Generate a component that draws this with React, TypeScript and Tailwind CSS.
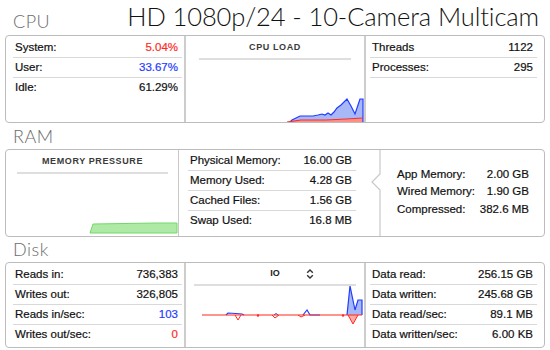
const rowFont = { fontFamily: '"Liberation Sans", Arial, sans-serif' };

type RowProps = {
  label: string;
  value: string;
  color?: string;
  last?: boolean;
};

const Row = ({ label, value, color, last }: RowProps) => (
  <div
    className={
      "flex h-5 items-center justify-between pl-[2px] pr-[4px] text-[11.5px] text-[#111] [-webkit-text-stroke:0.2px_currentColor] " +
      (last ? "" : "border-b border-[#d9d9d9]")
    }
  >
    <span>{label}</span>
    <span className={color}>{value}</span>
  </div>
);

const SectionTitle = ({ children }: { children: string }) => (
  <div
    className="pl-2 text-[18px] font-light leading-none tracking-[0.5px] text-[#6b6b6b]"
    style={{ fontFamily: "Lato, sans-serif" }}
  >
    {children}
  </div>
);

const PanelHeading = ({ children }: { children: React.ReactNode }) => (
  <div className="flex flex-col items-center">
    <div className="flex h-[20px] items-center text-[9px] font-bold tracking-[0.6px] text-[#3a3a3a]">
      {children}
    </div>
    <div className="h-[2px] w-[152px] bg-[#dedede]" />
  </div>
);

const Divider = () => <div className="w-[2px] bg-[#cdcdcd]" />;

const CpuGraph = () => (
  <svg width="178" height="30" viewBox="0 0 178 30" className="block">
    <polygon
      points="101,30 115,28 140,28 160,27 177,26 177,30"
      fill="#ff8f84"
      stroke="none"
    />
    <polygon
      points="104,30 106,28 114,24 127,24 132,23 136,22 139,23 142,21 145,23 148,20 151,16 155,13 161,7 165,14 169,22 172,13 174,7 177,7 177,27 160,27.5 140,28.5 115,28.5"
      fill="#a8b8f6"
    />
    <polyline
      points="104,30 106,28 114,24 127,24 132,23 136,22 139,23 142,21 145,23 148,20 151,16 155,13 161,7 165,14 169,22 172,13 174,7 177,7 177,30"
      fill="none"
      stroke="#1f3dff"
      strokeWidth="1.2"
    />
    <polyline
      points="101,30 115,28 140,28 160,27 177,26"
      fill="none"
      stroke="#ff2a1f"
      strokeWidth="1.2"
    />
  </svg>
);

const IoGraph = () => (
  <svg width="178" height="45" viewBox="0 0 178 45" className="block">
    <polygon
      points="161,29 164,0 169,24 172,14 176,14 176,29"
      fill="#a8b8f6"
    />
    <polyline
      points="161,29 164,0 169,24 172,14 176,14 176,29"
      fill="none"
      stroke="#1f3dff"
      strokeWidth="1.2"
    />
    <polygon points="162,29 167,38 172,29" fill="#ffaaa2" />
    <polyline
      points="162,29 167,38 172,29"
      fill="none"
      stroke="#ff2a1f"
      strokeWidth="1"
    />
    <polyline
      points="40,29 42,27 50,27.5 56,28 58,29"
      fill="none"
      stroke="#1f3dff"
      strokeWidth="1.2"
    />
    <polyline
      points="117,29 121,24 124,29 134,29"
      fill="none"
      stroke="#1f3dff"
      strokeWidth="1.2"
    />
    <polyline
      points="88,29 90,27.5 92,29"
      fill="none"
      stroke="#1f3dff"
      strokeWidth="1"
    />
    <polyline
      points="49,29 52,34 55,29"
      fill="none"
      stroke="#ff2a1f"
      strokeWidth="1"
    />
    <polyline
      points="86,29 89,32 93,29"
      fill="none"
      stroke="#ff2a1f"
      strokeWidth="1"
    />
    <polyline
      points="112,29 115,31 119,29"
      fill="none"
      stroke="#ff2a1f"
      strokeWidth="1"
    />
    <circle cx="72" cy="29.5" r="1.2" fill="#ff2a1f" />
    <circle cx="157" cy="29.5" r="1.2" fill="#ff2a1f" />
    <line x1="16" y1="29" x2="176" y2="29" stroke="#ff2a1f" strokeWidth="1.2" />
  </svg>
);

const UpDown = () => (
  <svg width="8" height="10" viewBox="0 0 8 10" className="block">
    <polyline
      points="1.2,3.8 4,1 6.8,3.8"
      fill="none"
      stroke="#333"
      strokeWidth="1.4"
    />
    <polyline
      points="1.2,6.2 4,9 6.8,6.2"
      fill="none"
      stroke="#333"
      strokeWidth="1.4"
    />
  </svg>
);

export default function App() {
  return (
    <div className="h-[350px] w-[550px] bg-white px-[5px]" style={rowFont}>
      {/* CPU */}
      <div className="flex h-[35px] items-end justify-between pb-[5px]">
        <SectionTitle>CPU</SectionTitle>
        <div
          className="mb-[1px] pr-[6px] text-[25.5px] font-light leading-none tracking-[-0.1px] text-[#111]"
          style={{ fontFamily: "Lato, sans-serif" }}
        >
          HD 1080p/24 - 10-Camera Multicam
        </div>
      </div>
      <div className="flex h-[88px] rounded-[4px] border border-[#bcbcbc]">
        <div className="w-[178px] pl-[7px] pr-[2px] pt-[2px]">
          <Row label="System:" value="5.04%" color="text-[#ff2a1f]" />
          <Row label="User:" value="33.67%" color="text-[#1f3dff]" />
          <Row label="Idle:" value="61.29%" last />
        </div>
        <Divider />
        <div className="flex w-[178px] flex-col justify-between pt-[2px]">
          <PanelHeading>CPU LOAD</PanelHeading>
          <CpuGraph />
        </div>
        <Divider />
        <div className="flex-1 pl-[4px] pr-[7px] pt-[2px]">
          <Row label="Threads" value="1122" />
          <Row label="Processes:" value="295" />
        </div>
      </div>

      {/* RAM */}
      <div className="flex h-[26px] items-end pb-[4px]">
        <SectionTitle>RAM</SectionTitle>
      </div>
      <div className="flex h-[88px] rounded-[4px] border border-[#bcbcbc]">
        <div className="flex w-[172px] flex-col justify-between pt-[2px]">
          <div className="pl-[11px]">
            <div className="flex h-[20px] w-[151px] items-center justify-center text-[9px] font-bold tracking-[0.6px] text-[#3a3a3a]">
              MEMORY PRESSURE
            </div>
            <div className="h-[2px] w-[151px] bg-[#dedede]" />
          </div>
          <svg width="172" height="12" viewBox="0 0 172 12" className="mb-[2px] block">
            <polygon
              points="87,2 150,1 171,1 171,11 84,11"
              fill="#aeeaa6"
              stroke="#72d86a"
              strokeWidth="1"
            />
          </svg>
        </div>
        <div className="w-[1px] bg-[#c8c8c8]" />
        <div className="w-[192px] pl-[9px] pr-[15px] pt-[1px]">
          <Row label="Physical Memory:" value="16.00 GB" />
          <Row label="Memory Used:" value="4.28 GB" />
          <Row label="Cached Files:" value="1.56 GB" />
          <Row label="Swap Used:" value="16.8 MB" last />
        </div>
        <svg width="10" height="86" viewBox="0 0 10 86" className="block shrink-0">
          <polyline
            points="9,0 9,24 1,32 9,40 9,86"
            fill="none"
            stroke="#c8c8c8"
            strokeWidth="1.2"
          />
        </svg>
        <div className="flex flex-1 flex-col justify-center pb-[2px] pl-[16px] pr-[15px] text-[11.5px] leading-[17.5px] text-[#111] [-webkit-text-stroke:0.2px_currentColor]">
          <div className="flex justify-between">
            <span>App Memory:</span>
            <span>2.00 GB</span>
          </div>
          <div className="flex justify-between">
            <span>Wired Memory:</span>
            <span>1.90 GB</span>
          </div>
          <div className="flex justify-between">
            <span>Compressed:</span>
            <span>382.6 MB</span>
          </div>
        </div>
      </div>

      {/* Disk */}
      <div className="flex h-[25px] items-end pb-[4px]">
        <SectionTitle>Disk</SectionTitle>
      </div>
      <div className="flex h-[86px] rounded-[4px] border border-[#bcbcbc]">
        <div className="w-[178px] pl-[7px] pr-[2px] pt-[2px]">
          <Row label="Reads in:" value="736,383" />
          <Row label="Writes out:" value="326,805" />
          <Row label="Reads in/sec:" value="103" color="text-[#1f3dff]" />
          <Row label="Writes out/sec:" value="0" color="text-[#ff2a1f]" last />
        </div>
        <Divider />
        <div className="flex w-[178px] flex-col pt-[1px]">
          <div className="flex flex-col items-center">
            <div className="relative flex h-[20px] w-[162px] items-center justify-center text-[9px] font-bold text-[#222]">
              <span>IO</span>
              <span className="absolute left-[112px] top-[5px]">
                <UpDown />
              </span>
            </div>
            <div className="h-[2px] w-[162px] bg-[#dedede]" />
          </div>
          <IoGraph />
        </div>
        <Divider />
        <div className="flex-1 pl-[4px] pr-[7px] pt-[2px]">
          <Row label="Data read:" value="256.15 GB" />
          <Row label="Data written:" value="245.68 GB" />
          <Row label="Data read/sec:" value="89.1 MB" />
          <Row label="Data written/sec:" value="6.00 KB" last />
        </div>
      </div>
    </div>
  );
}
